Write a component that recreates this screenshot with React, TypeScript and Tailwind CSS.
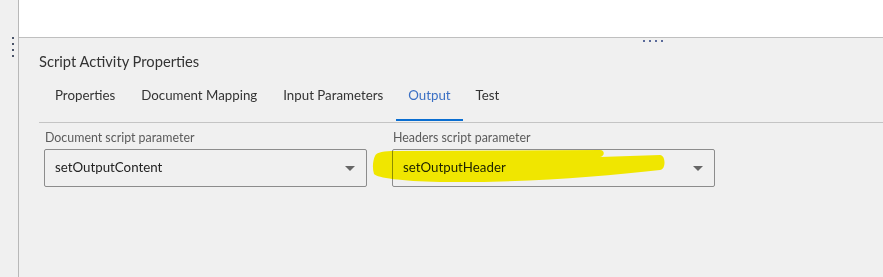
import React from "react";

const tabs = ["Properties", "Document Mapping", "Input Parameters", "Output", "Test"];

// ── Select field ──
function SelectField({ label, value }: { label: string; value: string }) {
  return (
    <div className="w-[323px] flex flex-col">
      <label className="text-[12.4px] leading-[18px] text-[#5b5b5b] pl-[1px]">{label}</label>
      <div className="mt-[2px] h-[38px] border border-[#8c8c8c] rounded-[2px] flex items-center justify-between pl-[10px] pr-[11px] text-[13.3px] text-[#222]">
        <span>{value}</span>
        <span className="w-0 h-0 border-l-[5px] border-r-[5px] border-t-[5px] border-l-transparent border-r-transparent border-t-[#666]" />
      </div>
    </div>
  );
}

export default function App() {
  return (
    <div
      className="w-[883px] h-[277px] flex bg-[#f0f0f0] overflow-hidden relative"
      style={{ fontFamily: "Lato, 'Liberation Sans', sans-serif" }}
    >
      {/* left splitter */}
      <div className="w-[19px] shrink-0 border-r border-[#b8b8b8] flex flex-col items-center pt-[37px] pl-[7px]">
        {[0, 1, 2, 3].map((i) => (
          <span key={i} className="w-[2px] h-[2px] bg-[#4a5468] mb-[4px]" />
        ))}
      </div>

      <div className="flex-1 flex flex-col">
        {/* top canvas */}
        <div className="h-[38px] bg-white border-b border-[#bfbfbf] shrink-0" />

        {/* panel */}
        <div className="flex-1 flex flex-col pl-[20px]">
          <div className="flex gap-[4px] pt-[2px] pl-[604px] h-[4px]">
            {[0, 1, 2, 3].map((i) => (
              <span key={i} className="w-[2px] h-[2px] bg-[#5a6a9a]" />
            ))}
          </div>

          <h2 className="mt-[9px] text-[14.7px] leading-[20px] text-[#333]">Script Activity Properties</h2>

          {/* tabs */}
          <div className="mt-[14px] flex border-b border-[#c4c4c4] pl-[3px]">
            {tabs.map((t) => (
              <div
                key={t}
                className={
                  t === "Output"
                    ? "px-[12px] h-[36px] flex items-start text-[13.3px] leading-[20px] text-[#3a6fc4] border-b-[2px] border-[#0a6ed1] mb-[1px]"
                    : "px-[13px] h-[36px] flex items-start text-[13.3px] leading-[20px] text-[#333] mb-[1px]"
                }
              >
                {t}
              </div>
            ))}
          </div>

          {/* fields */}
          <div className="mt-[6px] pl-[5px] flex gap-[25px]">
            <SelectField label="Document script parameter" value="setOutputContent" />
            <SelectField label="Headers script parameter" value="setOutputHeader" />
          </div>
        </div>
      </div>

      {/* highlighter annotation */}
      <svg className="absolute left-0 top-0 pointer-events-none" width="883" height="277" style={{ mixBlendMode: "darken" }}>
        <path
          d="M375,156 C376,152 385,151 395,151 L600,150 C605,150 605,156 600,157 L660,155 C666,155 666,170 660,170 C600,177 520,183 440,182 C400,181 378,178 374,174 C372,168 373,160 375,156 Z"
          fill="#f0e600"
        />
      </svg>
    </div>
  );
}
